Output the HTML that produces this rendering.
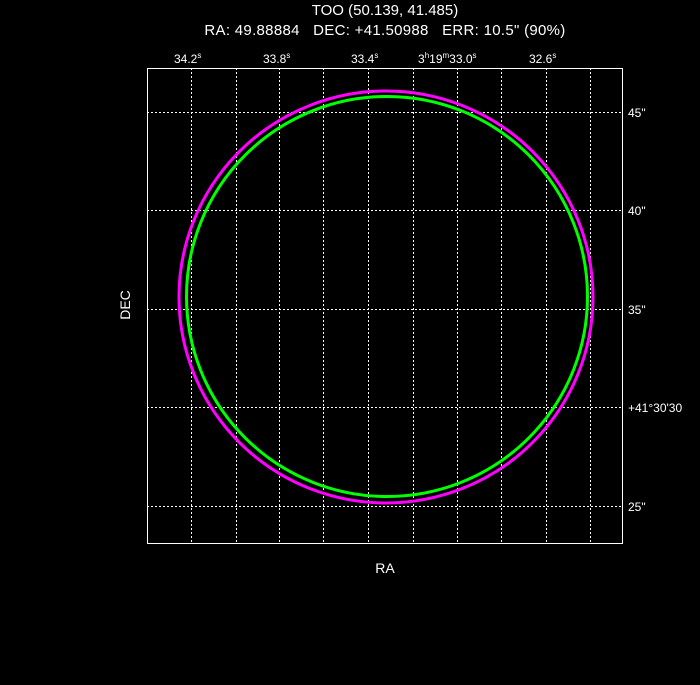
<!DOCTYPE html>
<html><head><style>
body{margin:0;background:#000;width:700px;height:680px;overflow:hidden}
svg text{font-family:"Liberation Sans",sans-serif;fill:#fff;white-space:pre}
</style></head><body>
<svg width="700" height="680" viewBox="0 0 700 680">
<text x="385" y="15" font-size="15" text-anchor="middle">TOO (50.139, 41.485)</text>
<text x="385" y="35" font-size="15" text-anchor="middle" letter-spacing="0.3">RA: 49.88884   DEC: +41.50988   ERR: 10.5" (90%)</text>
<g font-size="12">
<text x="174" y="63">34.2<tspan dy="-5" font-size="8">s</tspan></text>
<text x="263" y="63">33.8<tspan dy="-5" font-size="8">s</tspan></text>
<text x="351" y="63">33.4<tspan dy="-5" font-size="8">s</tspan></text>
<text x="418" y="63">3<tspan dy="-5" font-size="8">h</tspan><tspan dy="5">19</tspan><tspan dy="-5" font-size="8">m</tspan><tspan dy="5">33.0</tspan><tspan dy="-5" font-size="8">s</tspan></text>
<text x="529" y="63">32.6<tspan dy="-5" font-size="8">s</tspan></text>
<text x="628" y="117">45"</text>
<text x="628" y="215">40"</text>
<text x="628" y="314">35"</text>
<text x="628" y="412">+41°30'30</text>
<text x="628" y="511">25"</text>
</g>
<g stroke="#fff" stroke-width="1" stroke-dasharray="2,2" fill="none">
<path d="M191.5 68V543M236.5 68V543M279.5 68V543M323.5 68V543M368.5 68V543M413.5 68V543M457.5 68V543M501.5 68V543M546.5 68V543M590.5 68V543"/>
<path d="M147 112.5H622M147 210.5H622M147 309.5H622M147 407.5H622M147 506.5H622"/>
</g>
<rect x="147.5" y="68.5" width="475" height="475" fill="none" stroke="#fff"/>
<ellipse cx="386" cy="297" rx="207" ry="206" fill="none" stroke="#f0f" stroke-width="3"/>
<ellipse cx="387" cy="296.5" rx="200.5" ry="200" fill="none" stroke="#0f0" stroke-width="3"/>
<text x="385" y="573" font-size="14" text-anchor="middle">RA</text>
<text transform="translate(130,305) rotate(-90)" font-size="14" text-anchor="middle">DEC</text>
</svg>
</body></html>
